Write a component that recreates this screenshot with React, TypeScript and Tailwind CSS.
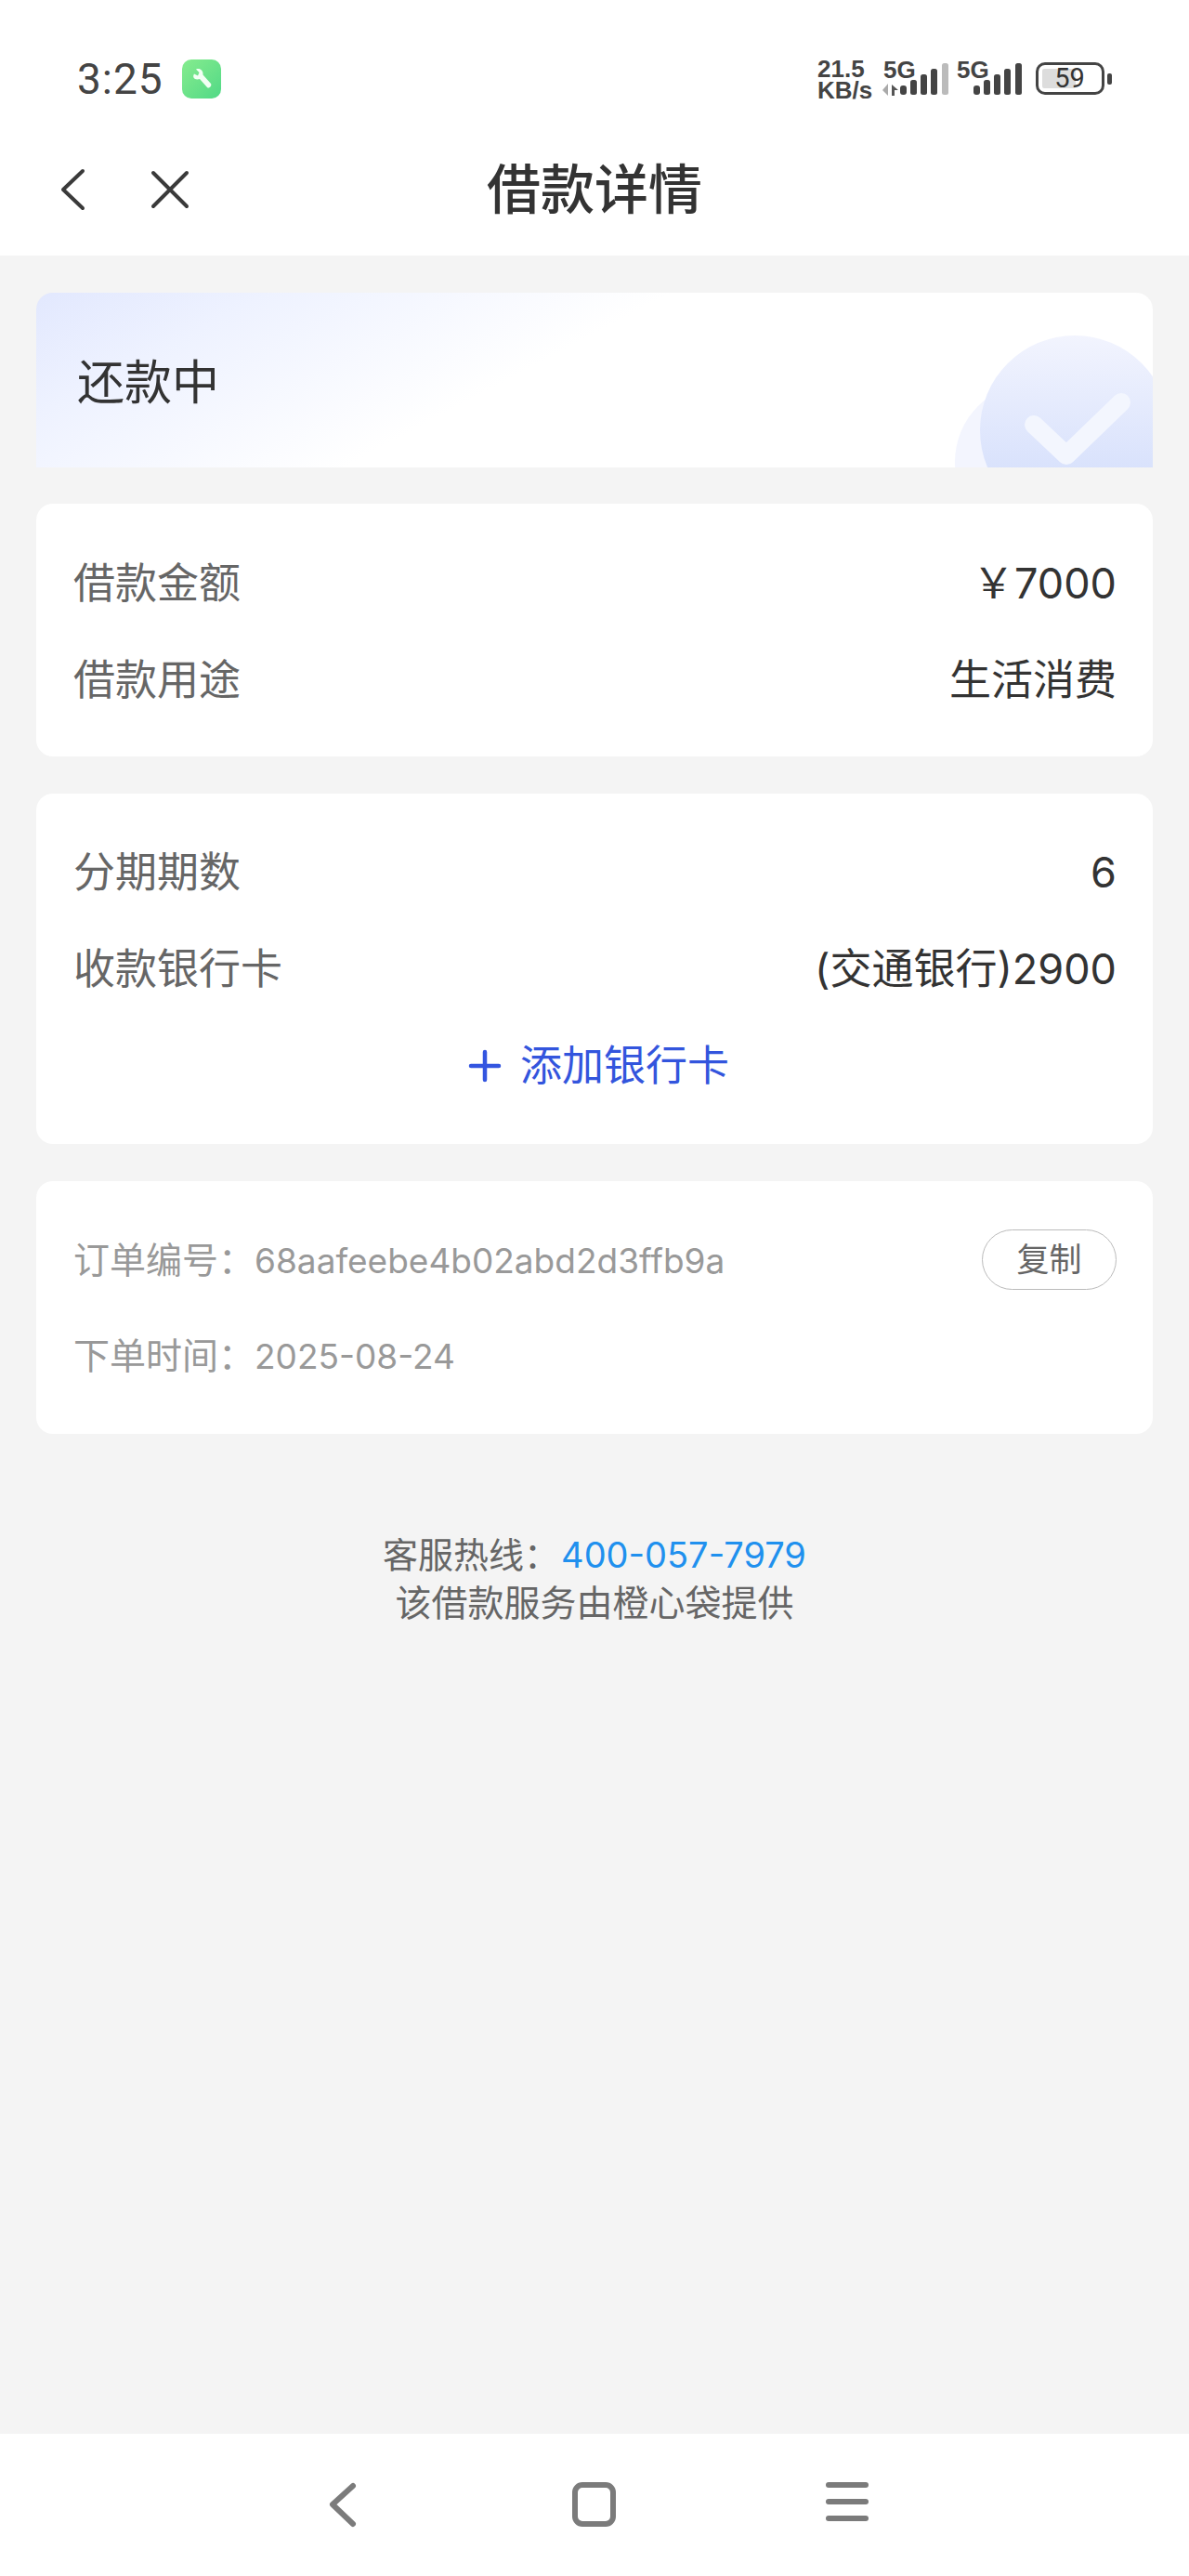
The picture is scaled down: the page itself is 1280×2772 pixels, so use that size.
import React from 'react';

const FONT = "font-['Inter','Noto_Sans_CJK_SC',sans-serif]";

const SignalBars: React.FC<{ lastFaded?: boolean }> = ({ lastFaded }) => (
    <svg width="52" height="34" viewBox="0 0 52 34">
        <rect x="0" y="24" width="7" height="10" rx="3" fill="#444" />
        <rect x="11" y="18" width="7" height="16" rx="2.5" fill="#444" />
        <rect x="22" y="12" width="7" height="22" rx="2.5" fill="#444" />
        <rect x="33" y="6" width="7" height="28" rx="2.5" fill="#444" />
        <rect x="45" y="0" width="7" height="34" rx="2.5" fill={lastFaded ? '#bbb' : '#444'} />
    </svg>
);

const StatusBar = () => (
    <div className="h-[131px] flex items-start justify-between pt-[64px] pl-[83px] pr-[83px]">
        <div className="flex items-center gap-[20px] h-[42px]">
            <span className="text-[46px] leading-[42px] text-[#444] font-['Roboto',sans-serif] tracking-[1px]">3:25</span>
            <div className="w-[42px] h-[42px] rounded-[10px] bg-gradient-to-br from-[#85ec8e] to-[#4fd986] flex items-center justify-center">
                <svg width="28" height="28" viewBox="0 0 28 28">
                    <path d="M6 8.5 L10 10.5 L11.5 7 L8 3.5 C12 2 16 4.5 15.5 9.5 L24 19 C25.5 21 22 25 20 23 L12 14 C7 15.5 3.5 12.5 6 8.5 Z" fill="#f2fff4" />
                </svg>
            </div>
        </div>
        <div className="flex items-start">
            <div className="font-['Liberation_Sans',sans-serif] font-bold text-[26px] leading-[23px] text-[#444] w-[71px] -mt-[1px]">
                <div>21.5</div>
                <div>KB/s</div>
            </div>
            <div className="relative w-[72px] h-[38px]">
                <span className="absolute left-0 top-[-2px] font-['Liberation_Sans',sans-serif] font-bold text-[26px] leading-[26px] text-[#444]">5G</span>
                <svg className="absolute left-[-2px] top-[26px]" width="20" height="14" viewBox="0 0 20 14">
                    <path d="M7 0 V13 L1 7 Z" fill="#aaa" />
                    <path d="M11 13 V1 L18 7 H14 V13 Z" fill="#555" />
                </svg>
                <div className="absolute left-[18px] top-[4px]"><SignalBars lastFaded /></div>
            </div>
            <div className="relative w-[76px] h-[38px] ml-[7px]">
                <span className="absolute left-0 top-[-2px] font-['Liberation_Sans',sans-serif] font-bold text-[26px] leading-[26px] text-[#444]">5G</span>
                <div className="absolute left-[18px] top-[4px]"><SignalBars /></div>
            </div>
            <div className="flex items-center ml-[9px] mt-[3px]">
                <div className="relative w-[74px] h-[35px] rounded-[10px] border-[3px] border-[#444] overflow-hidden">
                    <div className="absolute left-[4px] top-[4px] bottom-[4px] w-[36px] bg-[#ddd] rounded-[2px]" />
                    <span className="absolute inset-0 flex items-center justify-center text-[29px] leading-none text-[#333] font-['Roboto',sans-serif] -ml-[1px]">59</span>
                </div>
                <div className="w-[5px] h-[12px] rounded-[2px] bg-[#444] ml-[3px]" />
            </div>
        </div>
    </div>
);

const NavBar = () => (
    <div className="relative h-[144px] flex items-center justify-center">
        <div className="absolute left-[65px] top-[50px] flex items-center gap-[69px]">
            <svg width="28" height="46" viewBox="0 0 28 46" fill="none" stroke="#3a3a3a" strokeWidth="4" strokeLinecap="round" strokeLinejoin="round">
                <path d="M24 3 L3 23 L24 43" />
            </svg>
            <svg width="42" height="42" viewBox="0 0 42 42" fill="none" stroke="#3a3a3a" strokeWidth="4" strokeLinecap="round">
                <path d="M3 3 L39 39 M39 3 L3 39" />
            </svg>
        </div>
        <h1 className="text-[58px] leading-none font-medium text-[#333] mt-[1px]">借款详情</h1>
    </div>
);

const Row: React.FC<{ label: string; value: string }> = ({ label, value }) => (
    <div className="h-[104px] flex items-center justify-between">
        <span className="text-[45px] leading-[60px] text-[#666]">{label}</span>
        <span className="text-[45px] leading-[60px] text-[#333]">{value}</span>
    </div>
);

const Card: React.FC<{ className?: string; children: React.ReactNode }> = ({ className = '', children }) => (
    <div className={`bg-white rounded-[18px] pl-[40px] pr-[39px] ${className}`}>{children}</div>
);

const HomeBar = () => (
    <div className="h-[153px] bg-white relative">
        <svg className="absolute left-[350px] top-[50px]" width="36" height="52" viewBox="0 0 36 52" fill="none" stroke="#7b7b7b" strokeWidth="6" strokeLinecap="round" strokeLinejoin="round">
            <path d="M30 6 L8 26 L30 47" />
        </svg>
        <div className="absolute left-[616px] top-[52px] w-[47px] h-[48px] rounded-[11px] border-[6px] border-[#7b7b7b]" />
        <div className="absolute left-[889px] top-[52px] w-[46px] flex flex-col gap-[12px]">
            <div className="h-[6px] rounded-full bg-[#7b7b7b]" />
            <div className="h-[6px] rounded-full bg-[#7b7b7b]" />
            <div className="h-[6px] rounded-full bg-[#7b7b7b]" />
        </div>
    </div>
);

export default function App() {
    return (
        <div className={`w-[1280px] h-[2772px] bg-[#f4f4f4] flex flex-col ${FONT}`}>
            <div className="bg-white">
                <StatusBar />
                <NavBar />
            </div>

            <div className="flex-1 px-[39px] pt-[40px] flex flex-col">
                {/* status banner */}
                <div className="relative h-[188px] rounded-t-[18px] overflow-hidden bg-white bg-[linear-gradient(152deg,#e2e8fe_0%,#eef2ff_16%,#ffffff_44%)] flex items-center px-[44px]">
                    <span className="text-[51px] leading-[70px] text-[#333] mt-[5px]">还款中</span>
                    <svg className="absolute right-0 bottom-0" width="220" height="150" viewBox="0 0 220 150">
                        <defs>
                            <linearGradient id="disc" x1="0" y1="0" x2="0" y2="1">
                                <stop offset="0" stopColor="#f2f4fe" />
                                <stop offset="0.7" stopColor="#d9e2fc" />
                            </linearGradient>
                        </defs>
                        <circle cx="92" cy="144" r="85" fill="#f3f5fe" />
                        <circle cx="136" cy="110" r="102" fill="url(#disc)" />
                        <path d="M92 104 L127 137 L186 80" fill="none" stroke="#f3f6fe" strokeWidth="20" strokeLinecap="round" strokeLinejoin="round" />
                    </svg>
                </div>

                <Card className="mt-[39px] pt-[34px] pb-[30px]">
                    <Row label="借款金额" value="￥7000" />
                    <Row label="借款用途" value="生活消费" />
                </Card>

                <Card className="mt-[40px] pt-[33px] pb-[33px]">
                    <Row label="分期期数" value="6" />
                    <Row label="收款银行卡" value="(交通银行)2900" />
                    <div className="h-[103px] flex items-center justify-center gap-[20px] ml-[8px] text-[#3355dd]">
                        <svg width="36" height="36" viewBox="0 0 36 36" fill="none" stroke="#3355e0" strokeWidth="4.5" strokeLinecap="round">
                            <path d="M3 18 H33 M18 3 V33" />
                        </svg>
                        <span className="text-[45px] leading-[60px]">添加银行卡</span>
                    </div>
                </Card>

                <Card className="mt-[40px] pt-[34px] pb-[33px] text-[#999] text-[39px]">
                    <div className="h-[103px] flex items-center justify-between">
                        <span className="leading-[52px]">订单编号：<span className="text-[37px]">68aafeebe4b02abd2d3ffb9a</span></span>
                        <button className="w-[145px] h-[65px] -mt-[3px] rounded-full border-[1.5px] border-[#bbb] text-[35px] leading-[46px] text-[#666] flex items-center justify-center">复制</button>
                    </div>
                    <div className="h-[102px] flex items-center">
                        <span className="leading-[52px]">下单时间：<span className="text-[37px]">2025-08-24</span></span>
                    </div>
                </Card>

                <div className="mt-[105px] flex flex-col items-center text-[#666] text-[39px]">
                    <div className="h-[51px] flex items-center">
                        <span className="text-[38px]">客服热线：</span><span className="text-[#2090ee] text-[38px] ml-[2px]">400-057-7979</span>
                    </div>
                    <div className="h-[52px] flex items-center">该借款服务由橙心袋提供</div>
                </div>
            </div>

            <HomeBar />
        </div>
    );
}
